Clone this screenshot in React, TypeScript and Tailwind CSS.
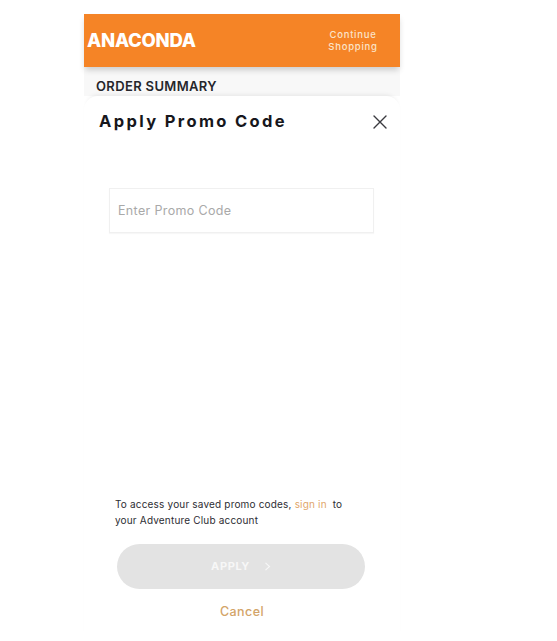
import React from "react";

export default function App() {
  return (
    <div className="h-[641px] w-[557px] overflow-hidden bg-white font-['Inter','Liberation_Sans',sans-serif]">
      <div className="ml-[84px] flex w-[316px] flex-col pt-[14px]">
        <header className="relative z-10 flex h-[53px] items-center justify-between bg-[#f58426] pl-[3px] pr-[20px] shadow-[0_4px_6px_-1px_rgba(0,0,0,0.18)]">
          <span className="text-[18.5px] font-extrabold leading-none tracking-[-0.25px] text-white">ANACONDA</span>
          <span className="mt-[1px] w-[54px] text-center text-[9.5px] font-medium leading-[12px] tracking-[0.75px] text-[#fbe3c8]">
            Continue Shopping
          </span>
        </header>
        <div className="flex h-[29px] items-end bg-[#f8f8f8] pl-[12px]">
          <span className="mb-[3px] text-[13px] font-semibold leading-[14px] tracking-[0.35px] text-[#26262b]">ORDER SUMMARY</span>
        </div>
        <main className="relative z-10 flex h-[545px] flex-col rounded-t-[14px] bg-white shadow-[0_-4px_4px_-3px_rgba(0,0,0,0.08)]">
          <div className="flex items-center justify-between pl-[15px] pr-[12px] pt-[16px]">
            <h1 className="-mt-[1px] mb-[1px] text-[16.5px] font-bold leading-[20px] tracking-[2.35px] text-[#17171c]">Apply Promo Code</h1>
            <svg width="16" height="16" viewBox="0 0 16 16" fill="none" stroke="#3a3a3f" strokeWidth="1.4" strokeLinecap="round">
              <path d="M2 2 L14 14 M14 2 L2 14" />
            </svg>
          </div>
          <div className="ml-[25px] mt-[56px] flex h-[45px] w-[265px] items-center border border-[#f0f0f0] pl-[8px] pt-[2px] shadow-[0_1px_1px_rgba(0,0,0,0.03)]">
            <span className="text-[12.5px] leading-none tracking-[0.35px] text-[#a9a9a9]">Enter Promo Code</span>
          </div>
          <p className="ml-[31px] mt-[263px] w-[235px] text-[10px] leading-[16px] tracking-[0.18px] text-[#2d2d33]">
            To access your saved promo codes, <span className="text-[#dfa66a]">sign in</span>&nbsp; to your Adventure Club account
          </p>
          <button className="ml-[33px] mt-[16px] flex h-[45px] w-[248px] items-center justify-center gap-[14px] rounded-full bg-[#e3e3e3]">
            <span className="text-[11px] font-bold leading-none tracking-[0.6px] text-[#f7f7f7]">APPLY</span>
            <svg width="7" height="9" viewBox="0 0 7 9" fill="none" stroke="#f7f7f7" strokeWidth="1.1">
              <path d="M1.5 0.8 L5.5 4.5 L1.5 8.2" />
            </svg>
          </button>
          <div className="mt-[15px] text-center text-[12.5px] font-medium leading-[16px] tracking-[0.4px] text-[#d3a468]">Cancel</div>
        </main>
      </div>
    </div>
  );
}
